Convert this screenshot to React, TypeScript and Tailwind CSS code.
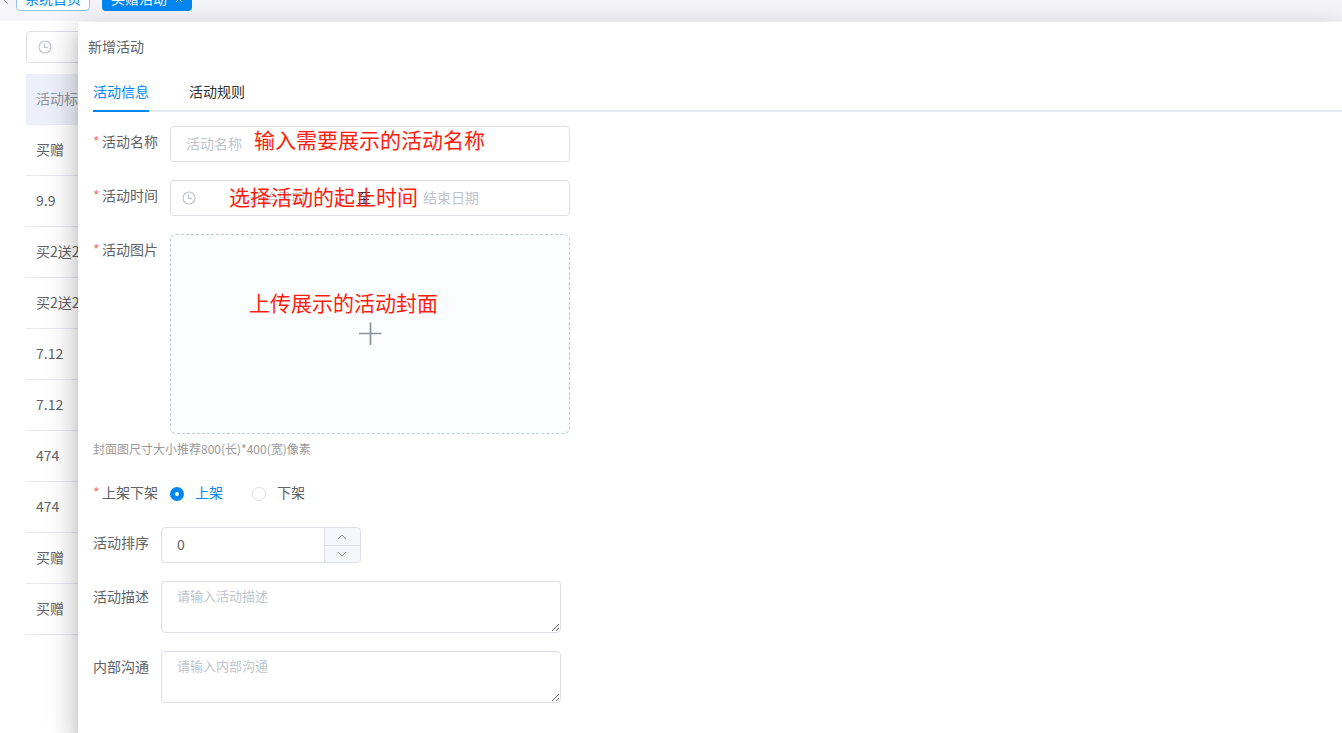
import { useState, type ReactNode } from "react";

const rows = ["买赠", "9.9", "买2送2", "买2送2", "7.12", "7.12", "474", "474", "买赠", "买赠"];

function ClockIcon() {
  return (
    <svg viewBox="0 0 14 14" className="size-3.5 shrink-0" fill="none" stroke="#c0c4cc" strokeWidth="1.200">
      <circle cx="7" cy="7" r="6" />
      <path d="M6.500 3.500V7.500H10" />
    </svg>
  );
}

function Note({ className, children }: { className: string; children: ReactNode }) {
  return (
    <span
      className={`pointer-events-none absolute text-[21px] leading-7 whitespace-nowrap text-[#ff1d0d] ${className}`}
    >
      {children}
    </span>
  );
}

function FieldLabel({ htmlFor, required, children }: { htmlFor: string; required?: boolean; children: ReactNode }) {
  return (
    <label htmlFor={htmlFor} className="flex shrink-0 pr-3 leading-[30px]">
      {required && <span className="w-[9px] text-[#f56c6c]">*</span>}
      {children}
    </label>
  );
}

const box = "rounded border border-[#dcdfe6] bg-white";
const placeholder = "placeholder:text-[#c0c4cc]";

export default function App() {
  const [shelf, setShelf] = useState("on");
  const [order, setOrder] = useState(0);

  return (
    <div className="relative min-h-screen overflow-hidden bg-white font-['Noto_Sans_CJK_SC',sans-serif] text-sm text-[#606266]">
      <header className="flex h-[21px] items-end overflow-hidden bg-[#f5f5fa] pb-2.5">
        <button aria-label="向左滚动" className="flex h-[26px] w-4 shrink-0 items-center text-[#909399]">
          <svg viewBox="0 0 16 16" className="size-4" fill="none" stroke="currentColor">
            <path d="M3 9L8 14M8 4L3 9" />
          </svg>
        </button>
        <a
          href="#home"
          className="mr-3 flex h-[26px] shrink-0 items-center rounded border border-[#8cc8fa] bg-white px-2 text-[#0187f5]"
        >
          系统首页
        </a>
        <a
          href="#gift"
          className="flex h-[26px] shrink-0 items-center gap-2 rounded bg-[#0187f5] px-[9px] text-white"
        >
          买赠活动
          <svg viewBox="0 0 8 8" className="mt-0.5 size-2" fill="none" stroke="currentColor">
            <path d="M1 1L7 7M7 1L1 7" />
          </svg>
        </a>
      </header>

      <main className="px-[26px] pt-2.5">
        <div className={`mb-[11px] flex h-8 w-80 items-center px-[11px] ${box}`}>
          <ClockIcon />
        </div>
        <table className="w-full border-collapse text-left">
          <thead>
            <tr className="h-[50px] border-b border-[#ebeef5] bg-[#edf0fa] text-[#909399]">
              <th className="px-2.5 pb-0.5 font-normal">活动标题</th>
            </tr>
          </thead>
          <tbody>
            {rows.map((title, i) => (
              <tr key={i} className="h-[51px] border-b border-[#e6e9f2]">
                <td className="px-2.5 pb-0.5">{title}</td>
              </tr>
            ))}
          </tbody>
        </table>
      </main>

      <section
        role="dialog"
        aria-labelledby="drawer-title"
        className="absolute top-[22px] right-0 bottom-0 left-[78px] bg-white shadow-[0_8px_10px_-5px_rgba(0,0,0,0.2),0_16px_24px_2px_rgba(0,0,0,0.14),0_6px_30px_5px_rgba(0,0,0,0.12)]"
      >
        <h2 id="drawer-title" className="px-2.5 pt-3 leading-6">
          新增活动
        </h2>
        <div className="pt-4 pl-[15px]">
          <div role="tablist" className="flex gap-10 border-b-2 border-[#e4e7ed] text-[#303133]">
            <button role="tab" aria-selected="true" className="-mb-0.5 h-[38px] border-b-2 border-[#0187f5] pb-0.5 text-[#0187f5]">
              活动信息
            </button>
            <button role="tab" aria-selected="false" className="-mb-0.5 h-[38px] border-b-2 border-transparent pb-0.5">
              活动规则
            </button>
          </div>

          <form className="flex flex-col gap-[18px] pt-3.5">
            <div className="flex">
              <FieldLabel htmlFor="name" required>活动名称</FieldLabel>
              <div className="relative w-[400px]">
                <input id="name" placeholder="活动名称" className={`h-9 w-full px-[15px] pb-0.5 ${box} ${placeholder}`} />
                <Note className="-top-px left-[84px]">输入需要展示的活动名称</Note>
              </div>
            </div>

            <div className="flex">
              <FieldLabel htmlFor="start" required>活动时间</FieldLabel>
              <div className={`relative flex h-9 w-[400px] items-center pl-[11px] ${box}`}>
                <ClockIcon />
                <input id="start" placeholder="开始日期" className={`ml-[3px] w-[156px] pb-0.5 text-center ${placeholder}`} />
                <span className="w-[18px] pb-0.5 text-center text-[#303133]">至</span>
                <input aria-label="结束日期" placeholder="结束日期" className={`w-[156px] pb-0.5 text-center ${placeholder}`} />
                <Note className="top-px left-[58px]">选择活动的起止时间</Note>
              </div>
            </div>

            <div>
              <div className="flex">
                <FieldLabel htmlFor="cover" required>活动图片</FieldLabel>
                <div className="relative w-[400px]">
                  <button
                    id="cover"
                    type="button"
                    aria-label="上传图片"
                    className="flex h-[200px] w-full items-center justify-center rounded-md border border-dashed border-[#c0ccda] bg-[#fbfdff]"
                  >
                    <svg viewBox="0 0 24 24" className="size-6" fill="none" stroke="#8c939d" strokeWidth="1.700">
                      <path d="M12.500 0.500V23M1 11.500H23.500" />
                    </svg>
                  </button>
                  <Note className="top-[54px] left-[79px]">上传展示的活动封面</Note>
                </div>
              </div>
              <p className="pt-[5px] text-xs leading-5 text-[#999999]">封面图尺寸大小推荐800(长)*400(宽)像素</p>
            </div>

            <div className="flex h-8">
              <FieldLabel htmlFor="shelf-on" required>上架下架</FieldLabel>
              <div className="flex items-center gap-[29px] pt-0.5">
                {[
                  { id: "on", text: "上架" },
                  { id: "off", text: "下架" },
                ].map((o) => (
                  <label
                    key={o.id}
                    htmlFor={`shelf-${o.id}`}
                    className={`flex items-center gap-[11px] ${shelf === o.id ? "text-[#0187f5]" : ""}`}
                  >
                    <input
                      type="radio"
                      id={`shelf-${o.id}`}
                      name="shelf"
                      checked={shelf === o.id}
                      onChange={() => setShelf(o.id)}
                      className="size-3.5 appearance-none rounded-full border border-[#dcdfe6] bg-white checked:border-5 checked:border-[#0187f5]"
                    />
                    <span className="pb-1">{o.text}</span>
                  </label>
                ))}
              </div>
            </div>

            <div className="flex">
              <FieldLabel htmlFor="order">活动排序</FieldLabel>
              <div className={`flex h-9 w-[200px] overflow-hidden ${box}`}>
                <input
                  id="order"
                  inputMode="numeric"
                  value={order}
                  onChange={(e) => setOrder(Number(e.target.value) || 0)}
                  className="min-w-0 flex-1 px-[15px] pb-0.5"
                />
                <div className="flex w-9 flex-col border-l border-[#dcdfe6] bg-[#f5f7fa] text-[#909399]">
                  <button
                    type="button"
                    aria-label="增加"
                    onClick={() => setOrder(order + 1)}
                    className="flex h-[18px] items-center justify-center border-b border-[#dcdfe6] pr-px"
                  >
                    <svg viewBox="0 0 10 6" className="h-1.5 w-2.5" fill="none" stroke="currentColor">
                      <path d="M1 5L5 1L9 5" />
                    </svg>
                  </button>
                  <button
                    type="button"
                    aria-label="减少"
                    onClick={() => setOrder(order - 1)}
                    className="flex h-4 items-center justify-center pr-px"
                  >
                    <svg viewBox="0 0 10 6" className="h-1.5 w-2.5" fill="none" stroke="currentColor">
                      <path d="M1 1L5 5L9 1" />
                    </svg>
                  </button>
                </div>
              </div>
            </div>

            <div className="flex">
              <FieldLabel htmlFor="desc">活动描述</FieldLabel>
              <textarea
                id="desc"
                placeholder="请输入活动描述"
                className={`h-[52px] w-[400px] resize-y px-[15px] py-1 text-[13px] leading-5 ${box} ${placeholder}`}
              />
            </div>

            <div className="flex">
              <FieldLabel htmlFor="internal">内部沟通</FieldLabel>
              <textarea
                id="internal"
                placeholder="请输入内部沟通"
                className={`h-[52px] w-[400px] resize-y px-[15px] py-1 text-[13px] leading-5 ${box} ${placeholder}`}
              />
            </div>
          </form>
        </div>
      </section>
    </div>
  );
}
